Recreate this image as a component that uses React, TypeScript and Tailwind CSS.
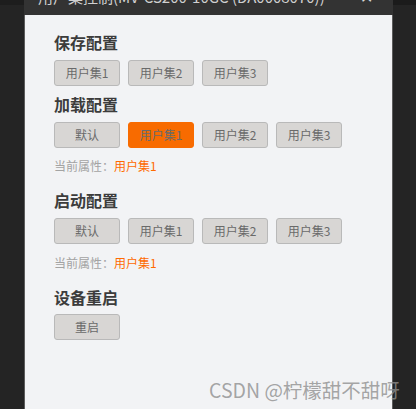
const font = { fontFamily: '"Noto Sans CJK SC", "Liberation Sans", sans-serif' };

function Btn({ label, active = false }: { label: string; active?: boolean }) {
    return (
        <button
            className={`w-[66px] h-[26px] rounded-[3px] border text-[12px] leading-none text-[#6a6a6a] ${active ? 'bg-[#f86b00] border-[#f86b00]' : 'bg-[#d8d6d4] border-[#b9b9b9]'}`}
            style={font}
        >
            {label}
        </button>
    );
}

function Header({ text, className = '' }: { text: string; className?: string }) {
    return (
        <div className={`text-[16px] leading-[20px] font-bold text-[#3c3c3c] ${className}`} style={font}>
            {text}
        </div>
    );
}

function Current({ className = '' }: { className?: string }) {
    return (
        <div className={`text-[12px] leading-[16px] ${className}`} style={font}>
            <span className="text-[#a3a3a3]">当前属性：</span>
            <span className="text-[#ff6a00]">用户集1</span>
        </div>
    );
}

export default function App() {
    return (
        <div className="relative w-[416px] h-[409px] flex bg-[#242424] overflow-hidden">
            <div className="w-[24px] flex flex-col">
                <div className="h-[5px] bg-[#1d1d1d]" />
            </div>
            <div className="w-[369px] flex flex-col">
                <div className="h-[15px] bg-[#333333] flex items-start justify-between overflow-hidden pl-[14px] pr-[20px]">
                    <div className="text-[15px] leading-[15px] -mt-[11px] text-[#d0d0d0] whitespace-nowrap" style={font}>
                        用户集控制(MV-CS200-10GC (DA0008070))
                    </div>
                    <div className="text-[16px] leading-[16px] -mt-[12px] text-[#d8d8d8]" style={font}>
                        ✕
                    </div>
                </div>
                <div className="flex-1 bg-[#f2f3f5] border-x border-[#5c5c5c] pl-[29px] pt-[17px]">
                    <Header text="保存配置" />
                    <div className="flex gap-[8px] mt-[8px]">
                        <Btn label="用户集1" />
                        <Btn label="用户集2" />
                        <Btn label="用户集3" />
                    </div>
                    <Header text="加载配置" className="mt-[8px]" />
                    <div className="flex gap-[8px] mt-[8px]">
                        <Btn label="默认" />
                        <Btn label="用户集1" active />
                        <Btn label="用户集2" />
                        <Btn label="用户集3" />
                    </div>
                    <Current className="mt-[10px]" />
                    <Header text="启动配置" className="mt-[16px]" />
                    <div className="flex gap-[8px] mt-[8px]">
                        <Btn label="默认" />
                        <Btn label="用户集1" />
                        <Btn label="用户集2" />
                        <Btn label="用户集3" />
                    </div>
                    <Current className="mt-[11px]" />
                    <Header text="设备重启" className="mt-[16px]" />
                    <div className="flex mt-[7px]">
                        <Btn label="重启" />
                    </div>
                </div>
            </div>
            <div className="flex-1 flex flex-col">
                <div className="h-[5px] bg-[#1b1b1b]" />
            </div>
            <div
                className="absolute left-[209px] top-[377px] text-[19.5px] leading-[26px] text-[#8f8f8f]/80 whitespace-nowrap"
                style={font}
            >
                CSDN @柠檬甜不甜呀
            </div>
        </div>
    );
}
